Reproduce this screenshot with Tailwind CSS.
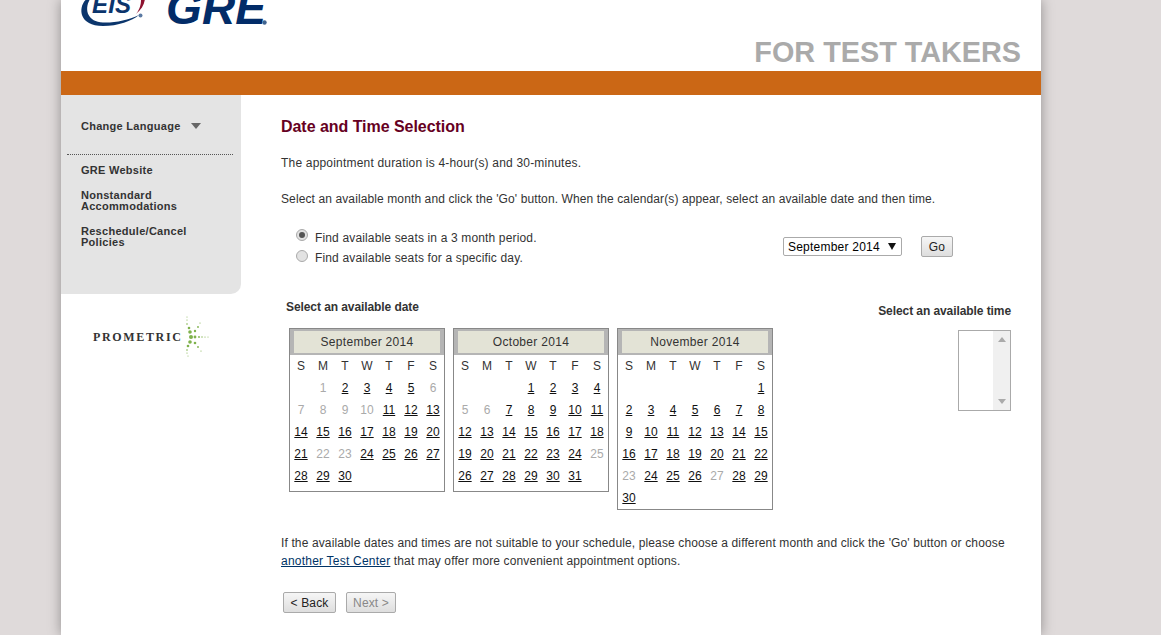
<!DOCTYPE html>
<html lang="en">
<head>
<meta charset="utf-8">
<title>Date and Time Selection</title>
<script src="https://cdn.jsdelivr.net/npm/@tailwindcss/browser@4"></script>
</head>
<body class="m-0 h-[635px] overflow-hidden bg-[#dfdada] font-['Liberation_Sans',Arial,sans-serif] text-[12px] leading-[16px] tracking-[0.13px] text-[#333]">
<div class="ml-[61px] h-[635px] w-[980px] bg-white shadow-[0_0_12px_rgba(0,0,0,0.35)]">
  <header class="flex h-[71px] items-start justify-between">
    <svg class="block" width="220" height="71" viewBox="61 0 220 71" aria-label="ETS GRE">
      <path d="M85.5,0 C78,8 79,26 103,26 C118,26 132,21 139,15 C128,20 115,23 103,22.5 C88,22 84,10 89.5,0 Z" fill="#0b356c"/>
      <path d="M144.8,0 C144,5 141,10 136,14 C140,9 141,4 141,0 Z" fill="#8e1230"/>
      <text x="92" y="13" font-family="Liberation Sans" font-weight="700" font-style="italic" font-size="24" fill="#0b356c">EIS</text>
      <circle cx="140.5" cy="15.5" r="2" fill="#5b7aa3"/>
      <text x="166" y="24" font-family="Liberation Sans" font-weight="700" font-style="italic" font-size="46" fill="#022c68">GRE</text>
      <circle cx="264.5" cy="22.5" r="2.2" fill="#3f638f"/>
    </svg>
    <div class="mt-[35px] mr-[20px] text-[28.8px] leading-[34px] font-bold tracking-normal text-[#aaa]">FOR TEST TAKERS</div>
  </header>
  <div class="h-[24px] bg-[#cb6715]"></div>
  <div class="flex">
    <aside class="w-[180px] shrink-0">
      <nav class="h-[199px] rounded-br-[10px] bg-[#e4e4e4] pt-[23px] text-[11px] leading-[10.5px] font-bold tracking-[0.28px] text-[#333]">
        <div class="flex h-[16px] items-center pl-[20px]">
          <span>Change Language</span>
          <svg class="ml-[10px]" width="10" height="6" viewBox="0 0 10 6"><path d="M0,0 H10 L5,6 Z" fill="#666"/></svg>
        </div>
        <div class="mx-[6px] mt-[20px] w-[166px] border-t border-dotted border-[#555]"></div>
        <ul class="mt-[10px] flex flex-col gap-[14.5px] pl-[20px]">
          <li>GRE Website</li>
          <li>Nonstandard<br>Accommodations</li>
          <li class="leading-[11px]">Reschedule/Cancel<br>Policies</li>
        </ul>
      </nav>
      <div class="mt-[22px] ml-[31px]">
        <svg class="block" width="120" height="44" viewBox="92 316 120 44" aria-label="Prometric">
          <text x="93" y="341" font-family="Liberation Serif" font-weight="700" font-size="12" letter-spacing="1.65" fill="#333">PROMETRIC</text>
          <g fill="#7fb24c">
            <circle cx="191" cy="337" r="2"/><circle cx="195" cy="337" r="1.4"/><circle cx="190" cy="332" r="1.8"/><circle cx="189" cy="328" r="1.3"/>
            <circle cx="190" cy="342" r="1.8"/><circle cx="188" cy="346" r="1.3"/><circle cx="195" cy="331" r="1.2"/><circle cx="195" cy="343" r="1.3"/>
            <circle cx="198" cy="327" r="0.9"/><circle cx="198" cy="347" r="0.9"/><circle cx="200" cy="323" r="0.6"/><circle cx="201" cy="351" r="0.6"/>
            <circle cx="199" cy="337" r="0.9"/><circle cx="202" cy="337" r="0.7"/><circle cx="205" cy="337" r="0.6"/><circle cx="208" cy="337" r="0.5"/>
            <circle cx="187" cy="324" r="0.8"/><circle cx="187" cy="320" r="0.6"/><circle cx="187" cy="317" r="0.5"/>
            <circle cx="187" cy="350" r="0.8"/><circle cx="187" cy="353" r="0.6"/><circle cx="188" cy="356" r="0.5"/>
          </g>
        </svg>
      </div>
    </aside>
    <main class="w-[800px] pt-[22px] pr-[30px] pl-[40px]">
      <h1 class="h-[20px] text-[16px] leading-[20px] font-bold tracking-[-0.04px] text-[#660022]">Date and Time Selection</h1>
      <p class="mt-[18px] tracking-[0.19px]">The appointment duration is 4-hour(s) and 30-minutes.</p>
      <p class="mt-[20px] tracking-[0.11px]">Select an available month and click the 'Go' button. When the calendar(s) appear, select an available date and then time.</p>
      <div class="mt-[22px] flex h-[40px] items-start justify-between">
        <div class="-mt-[1px] pl-[15px] tracking-[0.15px]">
          <div class="flex h-[20px] items-center gap-[7px]">
            <span class="flex size-[12px] -translate-y-[3px] items-center justify-center rounded-full border border-[#aaa] bg-[#e2e2e2]"><span class="size-[6px] rounded-full bg-[#555]"></span></span>
            <span>Find available seats in a 3 month period.</span>
          </div>
          <div class="flex h-[20px] items-center gap-[7px]">
            <span class="size-[12px] -translate-y-[2px] rounded-full border border-[#aaa] bg-[#e2e2e2]"></span>
            <span>Find available seats for a specific day.</span>
          </div>
        </div>
        <div class="mt-[7px] mr-[58px] flex items-center gap-[19px]">
          <div class="flex h-[19px] w-[119px] items-center justify-between rounded-[2px] border border-[#aaa] pr-[5px] pl-[4px] tracking-[0.22px] text-black">
            <span>September 2014</span>
            <svg width="8" height="7" viewBox="0 0 8 7"><path d="M0,0 H8 L4,7 Z" fill="#111"/></svg>
          </div>
          <button class="h-[21px] w-[32px] rounded-[2px] border border-[#aaa] bg-gradient-to-b from-[#f6f6f6] to-[#dedede] text-[12px] text-[#222]">Go</button>
        </div>
      </div>
      <div class="flex items-start justify-between">
        <div>
          <div class="mt-[30px] pl-[5px] font-bold tracking-[-0.08px]">Select an available date</div>
          <div class="mt-[13px] flex items-start gap-[8px] pl-[8px]">

            <table class="w-[156px] table-fixed border-separate border-spacing-0 border border-[#888] pb-[4px] text-center tracking-normal">
              <caption class="sr-only">September 2014</caption>
              <thead>
                <tr><th colspan="7" class="h-[26px] border-x-4 border-y-2 border-[#b5b5b5] bg-[#e3e3d6] p-0 font-normal tracking-[0.3px]">September 2014</th></tr>
                <tr class="h-[22px]"><th class="p-0 font-normal">S</th><th class="p-0 font-normal">M</th><th class="p-0 font-normal">T</th><th class="p-0 font-normal">W</th><th class="p-0 font-normal">T</th><th class="p-0 font-normal">F</th><th class="p-0 font-normal">S</th></tr>
              </thead>
              <tbody class="text-[#aaa]">
                <tr class="h-[22px]"><td></td><td>1</td><td><a class="text-[#111] underline">2</a></td><td><a class="text-[#111] underline">3</a></td><td><a class="text-[#111] underline">4</a></td><td><a class="text-[#111] underline">5</a></td><td>6</td></tr>
                <tr class="h-[22px]"><td>7</td><td>8</td><td>9</td><td>10</td><td><a class="text-[#111] underline">11</a></td><td><a class="text-[#111] underline">12</a></td><td><a class="text-[#111] underline">13</a></td></tr>
                <tr class="h-[22px]"><td><a class="text-[#111] underline">14</a></td><td><a class="text-[#111] underline">15</a></td><td><a class="text-[#111] underline">16</a></td><td><a class="text-[#111] underline">17</a></td><td><a class="text-[#111] underline">18</a></td><td><a class="text-[#111] underline">19</a></td><td><a class="text-[#111] underline">20</a></td></tr>
                <tr class="h-[22px]"><td><a class="text-[#111] underline">21</a></td><td>22</td><td>23</td><td><a class="text-[#111] underline">24</a></td><td><a class="text-[#111] underline">25</a></td><td><a class="text-[#111] underline">26</a></td><td><a class="text-[#111] underline">27</a></td></tr>
                <tr class="h-[22px]"><td><a class="text-[#111] underline">28</a></td><td><a class="text-[#111] underline">29</a></td><td><a class="text-[#111] underline">30</a></td><td></td><td></td><td></td><td></td></tr>
              </tbody>
            </table>

            <table class="w-[156px] table-fixed border-separate border-spacing-0 border border-[#888] pb-[4px] text-center tracking-normal">
              <caption class="sr-only">October 2014</caption>
              <thead>
                <tr><th colspan="7" class="h-[26px] border-x-4 border-y-2 border-[#b5b5b5] bg-[#e3e3d6] p-0 font-normal tracking-[0.3px]">October 2014</th></tr>
                <tr class="h-[22px]"><th class="p-0 font-normal">S</th><th class="p-0 font-normal">M</th><th class="p-0 font-normal">T</th><th class="p-0 font-normal">W</th><th class="p-0 font-normal">T</th><th class="p-0 font-normal">F</th><th class="p-0 font-normal">S</th></tr>
              </thead>
              <tbody class="text-[#aaa]">
                <tr class="h-[22px]"><td></td><td></td><td></td><td><a class="text-[#111] underline">1</a></td><td><a class="text-[#111] underline">2</a></td><td><a class="text-[#111] underline">3</a></td><td><a class="text-[#111] underline">4</a></td></tr>
                <tr class="h-[22px]"><td>5</td><td>6</td><td><a class="text-[#111] underline">7</a></td><td><a class="text-[#111] underline">8</a></td><td><a class="text-[#111] underline">9</a></td><td><a class="text-[#111] underline">10</a></td><td><a class="text-[#111] underline">11</a></td></tr>
                <tr class="h-[22px]"><td><a class="text-[#111] underline">12</a></td><td><a class="text-[#111] underline">13</a></td><td><a class="text-[#111] underline">14</a></td><td><a class="text-[#111] underline">15</a></td><td><a class="text-[#111] underline">16</a></td><td><a class="text-[#111] underline">17</a></td><td><a class="text-[#111] underline">18</a></td></tr>
                <tr class="h-[22px]"><td><a class="text-[#111] underline">19</a></td><td><a class="text-[#111] underline">20</a></td><td><a class="text-[#111] underline">21</a></td><td><a class="text-[#111] underline">22</a></td><td><a class="text-[#111] underline">23</a></td><td><a class="text-[#111] underline">24</a></td><td>25</td></tr>
                <tr class="h-[22px]"><td><a class="text-[#111] underline">26</a></td><td><a class="text-[#111] underline">27</a></td><td><a class="text-[#111] underline">28</a></td><td><a class="text-[#111] underline">29</a></td><td><a class="text-[#111] underline">30</a></td><td><a class="text-[#111] underline">31</a></td><td></td></tr>
              </tbody>
            </table>

            <table class="w-[156px] table-fixed border-separate border-spacing-0 border border-[#888] text-center tracking-normal">
              <caption class="sr-only">November 2014</caption>
              <thead>
                <tr><th colspan="7" class="h-[26px] border-x-4 border-y-2 border-[#b5b5b5] bg-[#e3e3d6] p-0 font-normal tracking-[0.3px]">November 2014</th></tr>
                <tr class="h-[22px]"><th class="p-0 font-normal">S</th><th class="p-0 font-normal">M</th><th class="p-0 font-normal">T</th><th class="p-0 font-normal">W</th><th class="p-0 font-normal">T</th><th class="p-0 font-normal">F</th><th class="p-0 font-normal">S</th></tr>
              </thead>
              <tbody class="text-[#aaa]">
                <tr class="h-[22px]"><td></td><td></td><td></td><td></td><td></td><td></td><td><a class="text-[#111] underline">1</a></td></tr>
                <tr class="h-[22px]"><td><a class="text-[#111] underline">2</a></td><td><a class="text-[#111] underline">3</a></td><td><a class="text-[#111] underline">4</a></td><td><a class="text-[#111] underline">5</a></td><td><a class="text-[#111] underline">6</a></td><td><a class="text-[#111] underline">7</a></td><td><a class="text-[#111] underline">8</a></td></tr>
                <tr class="h-[22px]"><td><a class="text-[#111] underline">9</a></td><td><a class="text-[#111] underline">10</a></td><td><a class="text-[#111] underline">11</a></td><td><a class="text-[#111] underline">12</a></td><td><a class="text-[#111] underline">13</a></td><td><a class="text-[#111] underline">14</a></td><td><a class="text-[#111] underline">15</a></td></tr>
                <tr class="h-[22px]"><td><a class="text-[#111] underline">16</a></td><td><a class="text-[#111] underline">17</a></td><td><a class="text-[#111] underline">18</a></td><td><a class="text-[#111] underline">19</a></td><td><a class="text-[#111] underline">20</a></td><td><a class="text-[#111] underline">21</a></td><td><a class="text-[#111] underline">22</a></td></tr>
                <tr class="h-[22px]"><td>23</td><td><a class="text-[#111] underline">24</a></td><td><a class="text-[#111] underline">25</a></td><td><a class="text-[#111] underline">26</a></td><td>27</td><td><a class="text-[#111] underline">28</a></td><td><a class="text-[#111] underline">29</a></td></tr>
                <tr class="h-[22px]"><td><a class="text-[#111] underline">30</a></td><td></td><td></td><td></td><td></td><td></td><td></td></tr>
              </tbody>
            </table>

          </div>
        </div>
        <div class="mt-[34px] flex flex-col items-end">
          <div class="font-bold tracking-[-0.08px]">Select an available time</div>
          <div class="mt-[11px] flex h-[81px] w-[53px] justify-end border border-[#aaa]">
            <div class="flex w-[17px] flex-col items-center justify-between bg-[#f0f0f0] py-[6px]">
              <svg width="8" height="5" viewBox="0 0 8 5"><path d="M0,5 H8 L4,0 Z" fill="#aaa"/></svg>
              <svg width="8" height="5" viewBox="0 0 8 5"><path d="M0,0 H8 L4,5 Z" fill="#aaa"/></svg>
            </div>
          </div>
        </div>
      </div>
      <p class="mt-[24px] leading-[18px]">If the available dates and times are not suitable to your schedule, please choose a different month and click the 'Go' button or choose<br><a class="tracking-[0.22px] text-[#003366] underline">another Test Center</a> that may offer more convenient appointment options.</p>
      <div class="mt-[22px] ml-[2px] flex gap-[10px]">
        <button class="h-[21px] w-[53px] rounded-[2px] border border-[#aaa] bg-gradient-to-b from-[#f6f6f6] to-[#dedede] text-[12px] text-[#222]">&lt; Back</button>
        <button class="h-[21px] w-[50px] rounded-[2px] border border-[#aaa] bg-gradient-to-b from-[#f6f6f6] to-[#dedede] text-[12px] text-[#888]">Next &gt;</button>
      </div>
    </main>
  </div>
</div>
</body>
</html>
